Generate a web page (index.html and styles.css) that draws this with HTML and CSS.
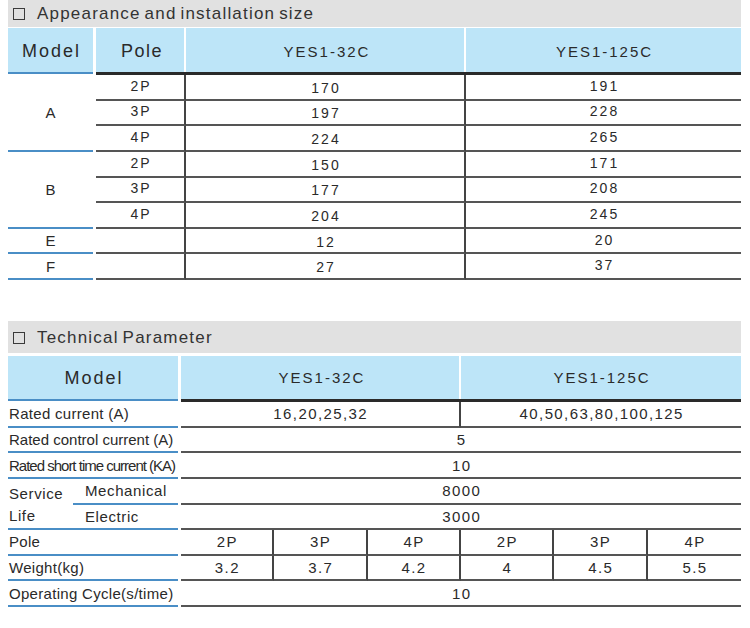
FILE: index.html
```html
<!DOCTYPE html>
<html>
<head>
<meta charset="utf-8">
<link rel="stylesheet" href="styles.css">
</head>
<body>
<div class="page">
  <div class="title"><span class="box"></span><span class="ttext">Appearance and installation size</span></div>
  <div class="t1">
    <div class="hm">Model</div>
    <div class="hc hs hpole">Pole</div>
    <div class="hc hs hmodel">YES1-32C</div>
    <div class="hc hmodel">YES1-125C</div>

    <div class="m r3">A</div>
    <div class="p">2P</div><div class="d s">170</div><div class="d">191</div>
    <div class="p">3P</div><div class="d s">197</div><div class="d">228</div>
    <div class="p">4P</div><div class="d s">224</div><div class="d">265</div>

    <div class="m r3">B</div>
    <div class="p">2P</div><div class="d s">150</div><div class="d">171</div>
    <div class="p">3P</div><div class="d s">177</div><div class="d">208</div>
    <div class="p">4P</div><div class="d s">204</div><div class="d">245</div>

    <div class="m">E</div>
    <div class="p"></div><div class="d s">12</div><div class="d">20</div>
    <div class="m">F</div>
    <div class="p"></div><div class="d s">27</div><div class="d">37</div>
  </div>

  <div class="title title2"><span class="box"></span><span class="ttext">Technical Parameter</span></div>
  <div class="t2">
    <div class="hm c2">Model</div>
    <div class="hc hs c3 hmodel2">YES1-32C</div>
    <div class="hc c3 hmodel2">YES1-125C</div>

    <div class="l">Rated current (A)</div>
    <div class="v c3 s">16,20,25,32</div>
    <div class="v c3">40,50,63,80,100,125</div>

    <div class="l tight">Rated control current (A)</div>
    <div class="v c6">5</div>

    <div class="l narrow">Rated short time current (KA)</div>
    <div class="v c6">10</div>

    <div class="sub">Service</div>
    <div class="l2">Mechanical</div>
    <div class="v c6">8000</div>

    <div class="sub sublast">Life</div>
    <div class="l2">Electric</div>
    <div class="v c6">3000</div>

    <div class="l">Pole</div>
    <div class="v s">2P</div><div class="v s">3P</div><div class="v s">4P</div>
    <div class="v s">2P</div><div class="v s">3P</div><div class="v">4P</div>

    <div class="l">Weight(kg)</div>
    <div class="v s">3.2</div><div class="v s">3.7</div><div class="v s">4.2</div>
    <div class="v s">4</div><div class="v s">4.5</div><div class="v">5.5</div>

    <div class="l">Operating Cycle(s/time)</div>
    <div class="v c6">10</div>
  </div>
</div>
</body>
</html>
```
FILE: styles.css
```css
* { box-sizing: border-box; margin: 0; padding: 0; }
body {
  margin: 0;
  background: #fff;
  font-family: "Liberation Sans", Arial, sans-serif;
  color: #2a2a2a;
}
.page { padding-left: 8px; width: 741px; }

.title {
  height: 27px;
  background: #e1e1e1;
  display: flex;
  align-items: center;
  padding-left: 5px;
  margin-bottom: 1px;
  color: #333;
  font-size: 17px;
  letter-spacing: 1.2px;
  word-spacing: -2px;
  white-space: nowrap;
}
.title2 { height: 32px; margin-top: 41px; margin-bottom: 3px; padding-top: 2px; }
.box {
  width: 12px;
  height: 12px;
  border: 1.5px solid #3a3a3a;
  margin-right: 12px;
  flex: none;
}

/* ---------- table 1 ---------- */
.t1 {
  display: grid;
  grid-template-columns: 88px 90px 280px 275px;
  grid-template-rows: 47px repeat(8, 25.625px);
}
.t1 > div, .t2 > div { white-space: nowrap; }
.hm {
  background: #bde5f8;
  border-bottom: 2px solid #4a8ec6;
  margin-right: 3px;
  margin-bottom: 1px;
  display: flex;
  align-items: center;
  justify-content: center;
  font-size: 18px;
  letter-spacing: 2px;
  padding-left: 2px;
  padding-top: 2px;
  color: #2a2a2a;
}
.hc {
  background: #bde5f8;
  background-clip: padding-box;
  border-bottom: 3px solid #2a2a2a;
  display: flex;
  align-items: center;
  justify-content: center;
  font-size: 15px;
  letter-spacing: 2px;
  padding-left: 2px;
}
.hs { background: linear-gradient(to left, #fff 2px, #bde5f8 2px); background-clip: padding-box; }
.hpole { font-size: 18px; letter-spacing: 1.5px; padding-top: 2px; }
.hmodel { padding-top: 3px; }

.m {
  border-bottom: 2px solid #4a8ec6;
  margin-right: 3px;
  display: flex;
  align-items: center;
  justify-content: center;
  font-size: 15px;
}
.r3 { grid-row: span 3; }
.p, .d {
  border-bottom: 2px solid #555;
  display: flex;
  align-items: center;
  justify-content: center;
  font-size: 14px;
  letter-spacing: 2px;
  padding-left: 2px;
}
.p { border-right: 2px solid #444; padding-bottom: 2px; }
.d { padding-bottom: 2px; }
.d.s { border-right: 2px solid #444; padding-bottom: 0; padding-top: 2px; }

/* ---------- table 2 ---------- */
.t2 {
  display: grid;
  grid-template-columns: 65px 108px repeat(6, 1fr);
  grid-template-rows: 46px repeat(8, 25.625px);
}
.c2 { grid-column: span 2; }
.c3 { grid-column: span 3; }
.c6 { grid-column: span 6; }
.hmodel2 { font-size: 15px; letter-spacing: 2px; }

.l, .l2 {
  border-bottom: 2px solid #4a8ec6;
  margin-right: 3px;
  display: flex;
  align-items: center;
  font-size: 15px;
  letter-spacing: 0.3px;
  padding-left: 1px;
}
.l { grid-column: span 2; }
.l2 { padding-left: 12px; letter-spacing: 0.6px; }
.tight { letter-spacing: 0; }
.narrow { letter-spacing: -1px; }
.sub {
  display: flex;
  align-items: center;
  font-size: 15px;
  letter-spacing: 0.6px;
  padding-left: 1px;
  padding-top: 3px;
}
.sublast {
  border-bottom: 2px solid #4a8ec6;
  padding-top: 0;
  padding-bottom: 2px;
}
.v {
  border-bottom: 2px solid #555;
  display: flex;
  align-items: center;
  justify-content: center;
  font-size: 15px;
  letter-spacing: 1.4px;
  padding-left: 1.4px;
}
.v.s { border-right: 2px solid #444; }
```
